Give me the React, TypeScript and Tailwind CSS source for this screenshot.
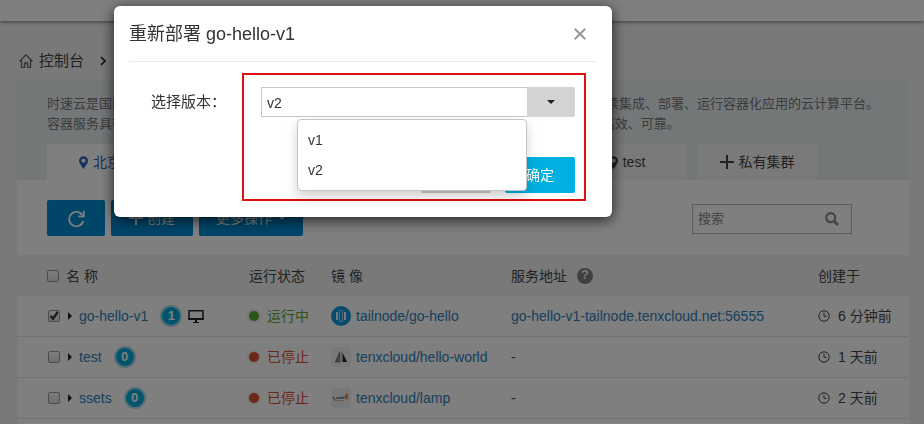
import { useState } from "react";
import type { ReactNode } from "react";

const clusters = ["北京区", "上海区", "广州区", "demo", "test"];

type Service = {
  name: string;
  count: number;
  running: boolean;
  console?: boolean;
  image: string;
  logo: ReactNode;
  address?: string;
  created: string;
};

function Plus() {
  return (
    <svg viewBox="0 0 14 14" className="size-[14px]" aria-hidden="true">
      <path d="M7 0v14M0 7h14" stroke="currentColor" strokeWidth="2" />
    </svg>
  );
}

function Pin() {
  return (
    <svg viewBox="0 0 10 14" className="h-[13px] w-[9px]" aria-hidden="true">
      <path
        fill="currentColor"
        fillRule="evenodd"
        d="M5 0a5 5 0 0 0-5 5c0 1.200.4 2 .8 2.800L4.200 13.500a.9.9 0 0 0 1.600 0L9.200 7.800C9.600 7 10 6.200 10 5a5 5 0 0 0-5-5Zm0 2.700a2.300 2.300 0 1 1 0 4.600 2.300 2.300 0 0 1 0-4.600Z"
      />
    </svg>
  );
}

function Clock() {
  return (
    <svg viewBox="0 0 12 12" className="size-[12px]" fill="none" stroke="currentColor" aria-hidden="true">
      <circle cx="6" cy="6" r="5.200" />
      <path d="M6 2.500V6.300h2.700" />
    </svg>
  );
}

function GoLogo() {
  return (
    <svg viewBox="0 0 20 20" className="size-5" fill="none" aria-hidden="true">
      <circle cx="10" cy="10" r="10" fill="#0a96dc" />
      <path d="M6 6v8M14 6v8" stroke="#e8f4fb" strokeWidth="2" />
      <path d="M8.500 4.500h3v11h-3z" stroke="#a5d5ef" />
    </svg>
  );
}

function HelloLogo() {
  return (
    <svg viewBox="0 0 20 20" className="size-5" aria-hidden="true">
      <rect width="20" height="20" rx="3" fill="#f3f3f3" />
      <path d="M8.500 5.500V15H4.500z" fill="#999" stroke="#555" strokeWidth=".8" />
      <path d="M9.300 4h1.400v11.500H9.300z" fill="#bbb" />
      <path d="M11.500 5.500 16 15h-4.500z" fill="#222" />
    </svg>
  );
}

function LampLogo() {
  return (
    <svg viewBox="0 0 20 20" className="size-5" aria-hidden="true">
      <rect width="20" height="20" rx="3" fill="#f0f0f0" />
      <path d="M2.500 8.500v2.500h2M5.500 11l1-2 1 2M8.500 11V9l1 1 1-1v2M12 11V9h1.500" fill="none" stroke="#4d7088" />
      <path d="M13.500 10c.5-2.500 1.500-4 2.500-5 1.500 2 1.500 5-.5 6.500z" fill="#dd8a45" />
      <path d="M3 12.500h10" stroke="#e5a673" strokeWidth=".8" />
    </svg>
  );
}

const services: Service[] = [
  {
    name: "go-hello-v1",
    count: 1,
    running: true,
    console: true,
    image: "tailnode/go-hello",
    logo: <GoLogo />,
    address: "go-hello-v1-tailnode.tenxcloud.net:56555",
    created: "6 分钟前",
  },
  { name: "test", count: 0, running: false, image: "tenxcloud/hello-world", logo: <HelloLogo />, created: "1 天前" },
  { name: "ssets", count: 0, running: false, image: "tenxcloud/lamp", logo: <LampLogo />, created: "2 天前" },
];

function Tick({ label, defaultChecked = false }: { label: string; defaultChecked?: boolean }) {
  return (
    <span className="inline-grid size-3 shrink-0">
      <input
        type="checkbox"
        aria-label={label}
        defaultChecked={defaultChecked}
        className="peer col-start-1 row-start-1 size-3 appearance-none rounded-xs border border-[#999] bg-linear-to-b from-[#fafafa] to-[#dedede]"
      />
      <svg
        viewBox="0 0 12 12"
        className="pointer-events-none invisible col-start-1 row-start-1 size-3 peer-checked:visible"
        aria-hidden="true"
      >
        <path d="M2.500 6 5 8.700 9.800 2" fill="none" stroke="#333" strokeWidth="2.200" />
      </svg>
    </span>
  );
}

function ServiceRow({ service }: { service: Service }) {
  return (
    <tr className="h-[41px] [&>td]:border-b [&>td]:border-[#e4e4e4]">
      <td className="pl-[31px]">
        <div className="flex items-center">
          <Tick label={service.name} defaultChecked={service.running} />
          <button type="button" aria-label="展开" className="flex w-[19px] justify-center">
            <svg viewBox="0 0 4 8" className="h-2 w-1">
              <path d="M0 0l4 4-4 4z" fill="#222" />
            </svg>
          </button>
          <a href="#service" className="text-[#2f80bd]">
            {service.name}
          </a>
          <span className="ml-3 flex size-[22px] items-center justify-center rounded-full border-2 border-[#a8dbea] bg-[#00a9d8] text-[13px] font-bold text-white">
            {service.count}
          </span>
          {service.console && (
            <svg viewBox="0 0 16 13" className="ml-1.5 h-[13px] w-4" aria-hidden="true">
              <path d="M1 .75h14v8.500H1z" fill="none" stroke="#222" strokeWidth="1.500" />
              <path d="M.3 8h15.400v2H.3zM7 10h2v2h2v1H5v-1h2z" fill="#222" />
            </svg>
          )}
        </div>
      </td>
      <td>
        <div className={service.running ? "flex items-center gap-2 text-[#58a833]" : "flex items-center gap-2 text-[#d9502f]"}>
          <span className="size-2.5 rounded-full bg-current ring-2 ring-[#efefe8]" />
          {service.running ? "运行中" : "已停止"}
        </div>
      </td>
      <td>
        <div className="flex items-center gap-[5px]">
          {service.logo}
          <a href="#image" className="text-[#2f80bd]">
            {service.image}
          </a>
        </div>
      </td>
      <td>
        {service.address ? (
          <a href="#address" className="text-[#2f80bd]">
            {service.address}
          </a>
        ) : (
          "-"
        )}
      </td>
      <td>
        <div className="flex items-center gap-2">
          <Clock />
          {service.created}
        </div>
      </td>
    </tr>
  );
}

function RedeployDialog() {
  const [version, setVersion] = useState("v2");
  return (
    <div className="fixed inset-0 bg-black/50 pt-1.5 pl-[114px] text-[#333]">
      <div
        role="dialog"
        aria-labelledby="dialog-title"
        className="w-[498px] rounded-md bg-white px-[15px] pb-4 shadow-[0_3px_14px_rgba(0,0,0,0.75)]"
      >
        <header className="flex h-14 items-center justify-between border-b border-[#ebebeb] pr-[11px]">
          <h2 id="dialog-title" className="text-lg">
            重新部署 go-hello-v1
          </h2>
          <button type="button" aria-label="关闭" className="text-[#999]">
            <svg viewBox="0 0 12 12" className="size-3">
              <path d="M.7.7l10.600 10.600M11.300.7.7 11.300" stroke="currentColor" strokeWidth="2" />
            </svg>
          </button>
        </header>
        <form className="flex justify-between pt-[11px] pr-[11px] pl-[22px]">
          <label htmlFor="version" className="pt-[17px] text-[15px] leading-6">
            选择版本：
          </label>
          <div className="h-32 w-[344px] border-2 border-[#dd1111] pt-3 pr-[9px] pl-[17px]">
            <div className="relative flex h-[30px]">
              <input
                id="version"
                value={version}
                onChange={(e) => setVersion(e.target.value)}
                className="min-w-0 flex-1 border border-r-0 border-[#c8c8c8] px-[5px] pt-0.5"
              />
              <button
                type="button"
                aria-label="选择"
                className="flex w-12 items-center justify-center rounded-r-xs bg-[#d3d3d3]"
              >
                <svg viewBox="0 0 8 4" className="h-1 w-2">
                  <path d="M0 0h8L4 4z" fill="#222" />
                </svg>
              </button>
              <ul className="absolute top-8 right-12 w-[230px] rounded-sm border border-[#c4c4c4] bg-white py-[5px] shadow-[0_6px_12px_rgba(0,0,0,0.18)]">
                {["v1", "v2"].map((v) => (
                  <li key={v}>
                    <button
                      type="button"
                      onClick={() => setVersion(v)}
                      className="block h-[30px] w-full px-2.5 text-left"
                    >
                      {v}
                    </button>
                  </li>
                ))}
              </ul>
            </div>
            <div className="mt-10 flex justify-end gap-3.5">
              <button type="button" className="h-9 w-[70px] rounded-xs bg-[#c8c8c8] text-white">
                取消
              </button>
              <button type="submit" className="h-9 w-[70px] rounded-xs bg-[#00b0e2] text-white">
                确定
              </button>
            </div>
          </div>
        </form>
      </div>
    </div>
  );
}

export default function App() {
  return (
    <div className="flex min-h-screen flex-col bg-[#f2f2f2] font-['Liberation_Sans','Noto_Sans_CJK_SC',sans-serif] text-sm text-[#444]">
      <div className="h-[21px] bg-[#fefefe] shadow-[0_1px_4px_rgba(0,0,0,0.5)]" />
      <nav className="flex h-[59px] items-center pt-5 pl-[19px] text-[15px]">
        <svg viewBox="0 0 14 14" className="size-3.5 text-[#666]" fill="none" stroke="currentColor" strokeWidth="1.300" aria-hidden="true">
          <path d="M.5 7.500 7 .9l6.500 6.600M2.500 6v7.300h3V9h3v4.300h3V6" />
        </svg>
        <a href="#console" className="ml-1.5">
          控制台
        </a>
        <svg viewBox="0 0 6 10" className="ml-4 h-2.5 w-1.5" fill="none" stroke="#222" strokeWidth="1.600" aria-hidden="true">
          <path d="M1 1l4 4-4 4" />
        </svg>
      </nav>

      <main className="mr-[15px] ml-[17px] flex flex-1 flex-col bg-[#fefefe]">
        <section className="flex h-[100px] flex-col justify-between bg-[#e9eef1] px-[30px]">
          <p className="pt-3.5 text-[13px] leading-5 whitespace-nowrap text-[#777]">
            时速云是国内领先的容器云平台服务提供商，为开发者和企业用户提供应用的镜像构建、发布、持续集成、部署、运行容器化应用的云计算平台。
            <br />
            容器服务具有 10 秒级启动、弹性伸缩、负载均衡以及服务自动发现等多种特性，让应用运行更加高效、可靠。
          </p>
          <div className="flex gap-2.5">
            {clusters.map((cluster, i) => (
              <button
                key={cluster}
                type="button"
                className={
                  i === 0
                    ? "flex h-9 w-[120px] items-center justify-center gap-[5px] bg-[#fefefe] text-[#2b66b8]"
                    : "flex h-9 w-[120px] items-center justify-center gap-[5px] bg-[#f4f4f4]"
                }
              >
                <Pin />
                {cluster}
              </button>
            ))}
            <button type="button" className="flex h-9 w-[120px] items-center justify-center gap-[5px] bg-[#f4f4f4]">
              <Plus />
              私有集群
            </button>
          </div>
        </section>

        <section className="flex h-[75px] items-start gap-1.5 pt-5 pr-[57px] pl-[30px] text-white">
          <button type="button" aria-label="刷新" className="flex h-9 w-[58px] items-center justify-center rounded-xs bg-[#028ad2]">
            <svg viewBox="0 0 17 17" className="size-[17px]" fill="none" stroke="currentColor" strokeWidth="1.800" aria-hidden="true">
              <path d="M14.500 5.300A7.200 7.200 0 1 0 15.300 11" />
              <path d="M15.800.8v5.500h-5.500" />
            </svg>
          </button>
          <button type="button" className="flex h-9 w-[82px] items-center justify-center gap-1 rounded-xs bg-[#028ad2]">
            <Plus />
            创建
          </button>
          <button type="button" className="flex h-9 w-[104px] items-center justify-center gap-1.5 rounded-xs bg-[#028ad2]">
            更多操作
            <svg viewBox="0 0 8 4" className="h-1 w-2">
              <path d="M0 0h8L4 4z" fill="currentColor" />
            </svg>
          </button>
          <div className="mt-1 ml-auto flex h-[30px] w-40 items-center border border-[#bbb] pr-3 pl-[5px] text-[#888]">
            <input
              aria-label="搜索"
              placeholder="搜索"
              className="min-w-0 flex-1 text-[13px] placeholder:text-[#888]"
            />
            <svg viewBox="0 0 14 14" className="size-3.5" fill="none" stroke="currentColor" strokeWidth="2.200" aria-hidden="true">
              <circle cx="5.700" cy="5.700" r="4.500" />
              <path d="M9 9l4 4" strokeWidth="2.600" />
            </svg>
          </div>
        </section>

        <table className="w-full table-fixed border-separate border-spacing-0 text-left">
          <colgroup>
            <col className="w-[232px]" />
            <col className="w-[82px]" />
            <col className="w-[180px]" />
            <col />
            <col className="w-[91px]" />
          </colgroup>
          <thead>
            <tr className="h-[41px] bg-[#f2f2f2]">
              <th className="pl-[30px] font-normal">
                <div className="flex items-center gap-[7px]">
                  <Tick label="全选" />
                  名 称
                </div>
              </th>
              <th className="font-normal">运行状态</th>
              <th className="font-normal">镜 像</th>
              <th className="font-normal">
                <div className="flex items-center gap-2.5">
                  服务地址
                  <span className="flex size-4 items-center justify-center rounded-full bg-[#808080] text-[13px] font-bold text-[#f2f2f2]">
                    ?
                  </span>
                </div>
              </th>
              <th className="font-normal">创建于</th>
            </tr>
          </thead>
          <tbody>
            {services.map((service) => (
              <ServiceRow key={service.name} service={service} />
            ))}
          </tbody>
        </table>
      </main>
      <RedeployDialog />
    </div>
  );
}
